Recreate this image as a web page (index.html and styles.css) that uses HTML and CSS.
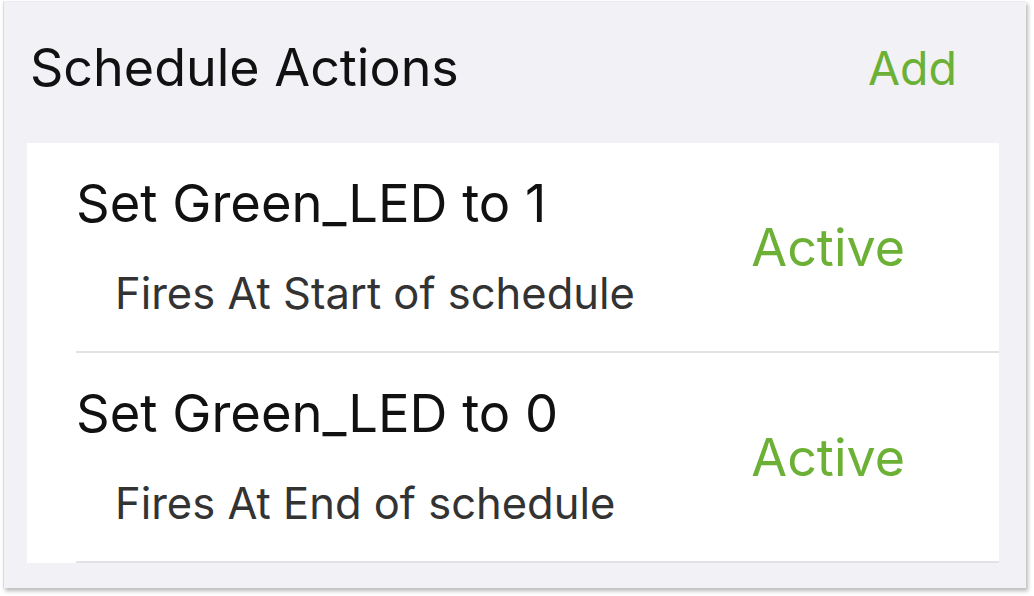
FILE: index.html
```html
<!DOCTYPE html>
<html lang="en">
<head>
<meta charset="utf-8">
<title>Schedule Actions</title>
<link rel="stylesheet" href="styles.css">
</head>
<body>
<div class="frame">
  <div class="header">
    <h1 class="header-title">Schedule Actions</h1>
    <span class="header-add">Add</span>
  </div>
  <div class="card">
    <div class="row">
      <div class="row-main">
        <div class="row-title">Set Green_LED to 1</div>
        <div class="row-sub">Fires At Start of schedule</div>
      </div>
      <div class="row-status">Active</div>
    </div>
    <div class="row">
      <div class="row-main">
        <div class="row-title">Set Green_LED to 0</div>
        <div class="row-sub">Fires At End of schedule</div>
      </div>
      <div class="row-status">Active</div>
    </div>
  </div>
</div>
</body>
</html>
```

FILE: styles.css
```css
* { box-sizing: border-box; }
html, body {
  margin: 0;
  padding: 0;
  background: #ffffff;
  width: 1034px;
  height: 596px;
  overflow: hidden;
}
body {
  font-family: Inter, "Liberation Sans", Arial, sans-serif;
  -webkit-font-smoothing: antialiased;
}
.frame {
  margin: 1px 0 0 3px;
  width: 1023px;
  height: 587px;
  background: #f1f1f6;
  border-left: 1px solid #dcdce0;
  border-top: 1px solid #ececf0;
  box-shadow: 2px 3px 4px rgba(0, 0, 0, 0.28);
}
.header {
  display: flex;
  justify-content: space-between;
  align-items: flex-start;
  height: 141px;
  padding: 36px 69px 0 26px;
}
.header-title {
  margin: 0;
  font-weight: 400;
  font-size: 52px;
  line-height: 60px;
  color: #111111;
}
.header-add {
  font-size: 46.5px;
  line-height: 60px;
  color: #6cb136;
  padding-top: 0;
}
.card {
  margin: 0 0 0 23px;
  width: 972px;
  background: #ffffff;
}
.row {
  display: flex;
  align-items: center;
  justify-content: space-between;
  height: 210px;
  margin-left: 49px;
  padding-right: 94px;
  border-bottom: 2px solid #e2e2e6;
}
.row-main {
  display: flex;
  flex-direction: column;
  align-self: flex-start;
  padding-top: 30px;
}
.row-title {
  font-size: 52.5px;
  line-height: 60px;
  color: #111111;
}
.row-sub {
  margin-top: 35px;
  padding-left: 39px;
  font-size: 43.5px;
  line-height: 50px;
  color: #333333;
}
.row-status {
  font-size: 52px;
  line-height: 60px;
  color: #6cb136;
  margin-top: 2px;
}
```
